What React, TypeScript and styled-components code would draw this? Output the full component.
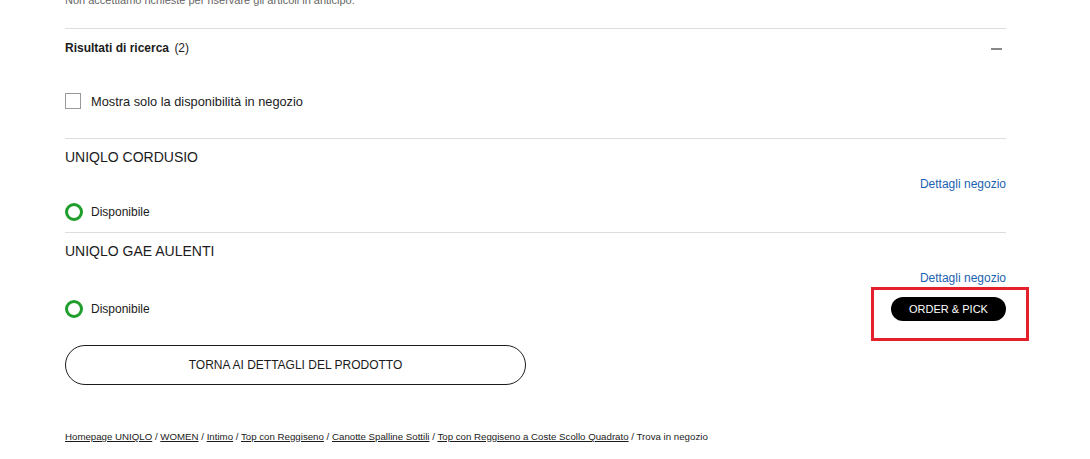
import styled, { createGlobalStyle } from 'styled-components';

const GlobalStyle = createGlobalStyle`
	html, body {
		margin: 0;
		padding: 0;
		background: #fff;
	}
	body {
		font-family: 'Liberation Sans', Arial, sans-serif;
		color: #1b1b1b;
	}
`;

export default function App() {
	const stores = [
		{ id: 1, name: 'UNIQLO CORDUSIO', status: 'Disponibile', orderable: false },
		{ id: 2, name: 'UNIQLO GAE AULENTI', status: 'Disponibile', orderable: true },
	];
	const crumbs = [
		'Homepage UNIQLO',
		'WOMEN',
		'Intimo',
		'Top con Reggiseno',
		'Canotte Spalline Sottili',
		'Top con Reggiseno a Coste Scollo Quadrato',
	];
	return (
		<Page>
			<GlobalStyle />
			<Notice>Non accettiamo richieste per riservare gli articoli in anticipo.</Notice>
			<Section>
				<SectionHeader>
					<Title>
						Risultati di ricerca <Count>(2)</Count>
					</Title>
					<Collapse aria-label="chiudi" />
				</SectionHeader>
				<FilterRow>
					<Checkbox />
					<span>Mostra solo la disponibilità in negozio</span>
				</FilterRow>
				{stores.map((store) => (
					<Store key={store.id} $last={store.id === stores.length}>
						<StoreName>{store.name}</StoreName>
						<DetailsLink>Dettagli negozio</DetailsLink>
						<StatusRow>
							<Status>
								<StatusDot />
								{store.status}
							</Status>
							{store.orderable && (
								<Highlight>
									<OrderButton>ORDER &amp; PICK</OrderButton>
								</Highlight>
							)}
						</StatusRow>
					</Store>
				))}
				<BackButton>TORNA AI DETTAGLI DEL PRODOTTO</BackButton>
			</Section>
			<Breadcrumb>
				{crumbs.map((crumb) => (
					<span key={crumb}>
						<a>{crumb}</a> /{' '}
					</span>
				))}
				Trova in negozio
			</Breadcrumb>
		</Page>
	);
}

const Page = styled.div`
	width: 941px;
	padding-left: 65px;
	margin-top: -7px;
`;

const Notice = styled.p`
	margin: 0;
	font-size: 11px;
	line-height: 14px;
	color: #666;
	padding-bottom: 21px;
	border-bottom: 1px solid #ddd;
`;

const Section = styled.section``;

const SectionHeader = styled.div`
	display: flex;
	align-items: center;
	justify-content: space-between;
	height: 38px;
`;

const Title = styled.h3`
	margin: 0;
	font-size: 12px;
	font-weight: bold;
`;

const Count = styled.span`
	font-weight: normal;
	margin-left: 2px;
`;

const Collapse = styled.span`
	width: 11px;
	height: 2px;
	background: #888;
	margin: 2px 4px 0 0;
`;

const FilterRow = styled.label`
	display: flex;
	align-items: center;
	gap: 10px;
	margin-top: 26px;
	padding-bottom: 29px;
	font-size: 12.8px;
	border-bottom: 1px solid #ddd;
`;

const Checkbox = styled.span`
	width: 14px;
	height: 14px;
	border: 1px solid #9a9a9a;
`;

const Store = styled.div<{ $last: boolean }>`
	padding-top: 8px;
	padding-bottom: 11px;
	border-bottom: ${(p) => (p.$last ? 'none' : '1px solid #ddd')};
`;

const StoreName = styled.div`
	font-size: 14px;
	line-height: 20px;
`;

const DetailsLink = styled.a`
	display: block;
	text-align: right;
	margin-top: 9px;
	font-size: 12px;
	line-height: 16px;
	color: #1b62b0;
	cursor: pointer;
`;

const StatusRow = styled.div`
	display: flex;
	align-items: center;
	justify-content: space-between;
	margin-top: 11px;
`;

const Status = styled.div`
	display: flex;
	align-items: center;
	gap: 8px;
	font-size: 12px;
`;

const StatusDot = styled.span`
	box-sizing: border-box;
	width: 18px;
	height: 18px;
	border-radius: 50%;
	border: 3px solid #1f9e2c;
`;

const Highlight = styled.div`
	position: relative;
	display: flex;
	&::after {
		content: '';
		position: absolute;
		left: -20px;
		right: -23px;
		top: -10px;
		bottom: -20px;
		border: 3px solid #e3202b;
		pointer-events: none;
	}
`;

const OrderButton = styled.button`
	width: 115px;
	height: 24px;
	border: none;
	border-radius: 12px;
	background: #000;
	color: #fff;
	font-family: 'Liberation Sans', Arial, sans-serif;
	font-size: 11px;
	padding: 0;
	cursor: pointer;
`;

const BackButton = styled.button`
	display: block;
	margin-top: 13px;
	width: 461px;
	height: 40px;
	border: 1px solid #1b1b1b;
	border-radius: 20px;
	background: #fff;
	color: #1b1b1b;
	font-family: 'Liberation Sans', Arial, sans-serif;
	font-size: 12px;
	cursor: pointer;
`;

const Breadcrumb = styled.nav`
	margin-top: 45px;
	font-size: 9.7px;
	line-height: 14px;
	color: #1b1b1b;
	a {
		color: #1b1b1b;
		text-decoration: underline;
		cursor: pointer;
	}
`;
